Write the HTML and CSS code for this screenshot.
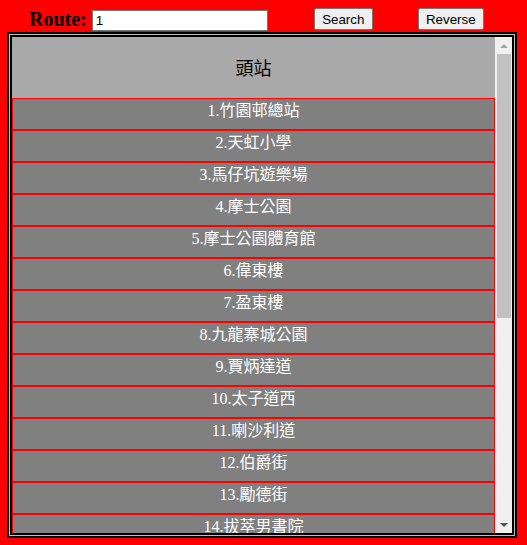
FILE: index.html
```html
<!DOCTYPE html>
<html lang="zh-Hant">
<head>
<meta charset="utf-8">
<title>Route</title>
<link rel="stylesheet" href="styles.css">
</head>
<body>
<div class="topbar">
  <label class="route-label" for="route">Route:</label>
  <input class="route-input" id="route" type="text" value="1">
  <button class="btn btn-search" type="button">Search</button>
  <button class="btn btn-reverse" type="button">Reverse</button>
</div>
<div class="box">
  <div class="list">
    <div class="head">頭站</div>
    <div class="stop">1.竹園邨總站</div>
    <div class="stop">2.天虹小學</div>
    <div class="stop">3.馬仔坑遊樂場</div>
    <div class="stop">4.摩士公園</div>
    <div class="stop">5.摩士公園體育館</div>
    <div class="stop">6.偉東樓</div>
    <div class="stop">7.盈東樓</div>
    <div class="stop">8.九龍寨城公園</div>
    <div class="stop">9.賈炳達道</div>
    <div class="stop">10.太子道西</div>
    <div class="stop">11.喇沙利道</div>
    <div class="stop">12.伯爵街</div>
    <div class="stop">13.勵德街</div>
    <div class="stop">14.拔萃男書院</div>
    <div class="stop">15.旺角警署</div>
    <div class="stop">16.弼街</div>
  </div>
  <div class="scrollbar">
    <div class="sb-btn"><span class="arrow-up"></span></div>
    <div class="sb-track"><div class="sb-thumb"></div></div>
    <div class="sb-btn"><span class="arrow-down"></span></div>
  </div>
</div>
</body>
</html>
```
FILE: styles.css
```css
html, body {
  margin: 0;
  padding: 0;
}
body {
  background: #ff0000;
  width: 527px;
  height: 545px;
  overflow: hidden;
  padding-left: 7px;
  box-sizing: border-box;
}
.topbar {
  display: flex;
  align-items: flex-start;
  height: 32px;
}
.route-label {
  margin-top: 8px;
  margin-left: 22px;
  font-family: "Liberation Serif", serif;
  font-weight: bold;
  font-size: 20px;
  line-height: 23px;
  color: #000;
}
.route-input {
  margin: 10px 0 0 5px;
  width: 176px;
  height: 21px;
  box-sizing: border-box;
  border: 1px solid #767676;
  padding: 1px 3px;
  font-family: "Liberation Sans", Arial, sans-serif;
  font-size: 13.33px;
  background: #fff;
  color: #000;
}
.btn {
  margin-top: 8px;
  height: 22px;
  box-sizing: border-box;
  padding: 1px 6px;
  border: 1px solid #767676;
  border-radius: 2px;
  background: #efefef;
  font-family: "Liberation Sans", Arial, sans-serif;
  font-size: 13.33px;
  color: #000;
}
.btn-search {
  margin-left: 46px;
  width: 59px;
}
.btn-reverse {
  margin-left: 45px;
  width: 66px;
}
.box {
  width: 510px;
  height: 506px;
  box-sizing: border-box;
  border: 5px double #000;
  background: #bdbdbd;
  display: flex;
  overflow: hidden;
}
.list {
  width: 483px;
  height: 496px;
  overflow: hidden;
  font-family: "Liberation Serif", "Noto Sans CJK TC", serif;
}
.head {
  height: 61px;
  background: #a9a9a9;
  color: #000;
  font-family: "Noto Sans CJK TC", sans-serif;
  font-size: 18px;
  display: flex;
  align-items: center;
  justify-content: center;
  padding-bottom: 2px;
  box-sizing: border-box;
}
.stop {
  height: 32px;
  box-sizing: border-box;
  border: 1px solid #ff0000;
  background: #808080;
  color: #fff;
  font-size: 16px;
  line-height: 24px;
  padding: 0 0 6px;
  text-align: center;
}
.scrollbar {
  width: 17px;
  height: 496px;
  background: #f0f0f0;
  display: flex;
  flex-direction: column;
}
.sb-btn {
  height: 17px;
  display: flex;
  align-items: center;
  justify-content: center;
}
.sb-track {
  flex: 1;
}
.sb-thumb {
  margin: 0 1px 0 2px;
  height: 264px;
  background: #c1c1c1;
}
.arrow-up {
  width: 0;
  height: 0;
  border-left: 4px solid transparent;
  border-right: 4px solid transparent;
  border-bottom: 4px solid #a3a3a3;
}
.arrow-down {
  width: 0;
  height: 0;
  border-left: 4px solid transparent;
  border-right: 4px solid transparent;
  border-top: 4px solid #505050;
}
```
